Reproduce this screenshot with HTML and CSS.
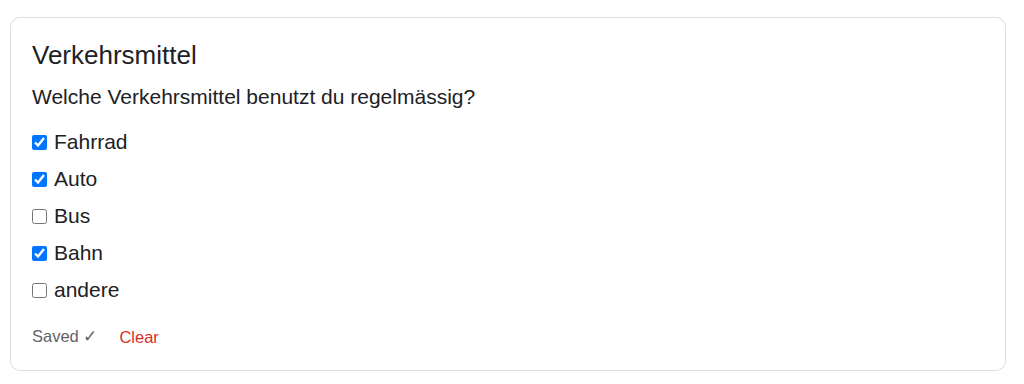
FILE: index.html
```html
<!DOCTYPE html>
<html>
<head>
  <title>Verkehrsmittel</title>
  <link rel="stylesheet" href="styles.css">
</head>
<body>
  <div class="card">
    <h2 class="title">Verkehrsmittel</h2>
    <p class="question">Welche Verkehrsmittel benutzt du regelmässig?</p>
    <div class="options">
      <label class="option"><input type="checkbox" checked> Fahrrad</label>
      <label class="option"><input type="checkbox" checked> Auto</label>
      <label class="option"><input type="checkbox"> Bus</label>
      <label class="option"><input type="checkbox" checked> Bahn</label>
      <label class="option"><input type="checkbox"> andere</label>
    </div>
    <div class="status">
      <span class="saved">Saved <span class="tick">✓</span></span>
      <a href="#" class="clear">Clear</a>
    </div>
  </div>
</body>
</html>
```

FILE: styles.css
```css
body {
  margin: 17px 18px 0 10px;
  font-family: "Liberation Sans", Arial, sans-serif;
  color: #202124;
  background-color: #fff;
}

.card {
  border: 1px solid #ddd;
  border-radius: 10px;
  padding: 21px 21px 23px 21px;
}

.title {
  margin: 0;
  font-size: 26px;
  font-weight: normal;
  line-height: 32px;
}

.question {
  margin: 13px 0 19px 0;
  font-size: 21px;
  line-height: 26px;
}

.options {
  display: flex;
  flex-direction: column;
  gap: 11px;
}

.option {
  display: flex;
  align-items: center;
  font-size: 21px;
  line-height: 26px;
}

.option input {
  width: 15px;
  height: 15px;
  margin: 0 7px 0 0;
}

.status {
  display: flex;
  align-items: center;
  margin-top: 23px;
  font-size: 16.5px;
  line-height: 20px;
}

.saved {
  color: #5f6368;
}

.tick {
  font-size: 17px;
}

.clear {
  margin-left: 22px;
  color: #d93025;
  text-decoration: none;
}
```
